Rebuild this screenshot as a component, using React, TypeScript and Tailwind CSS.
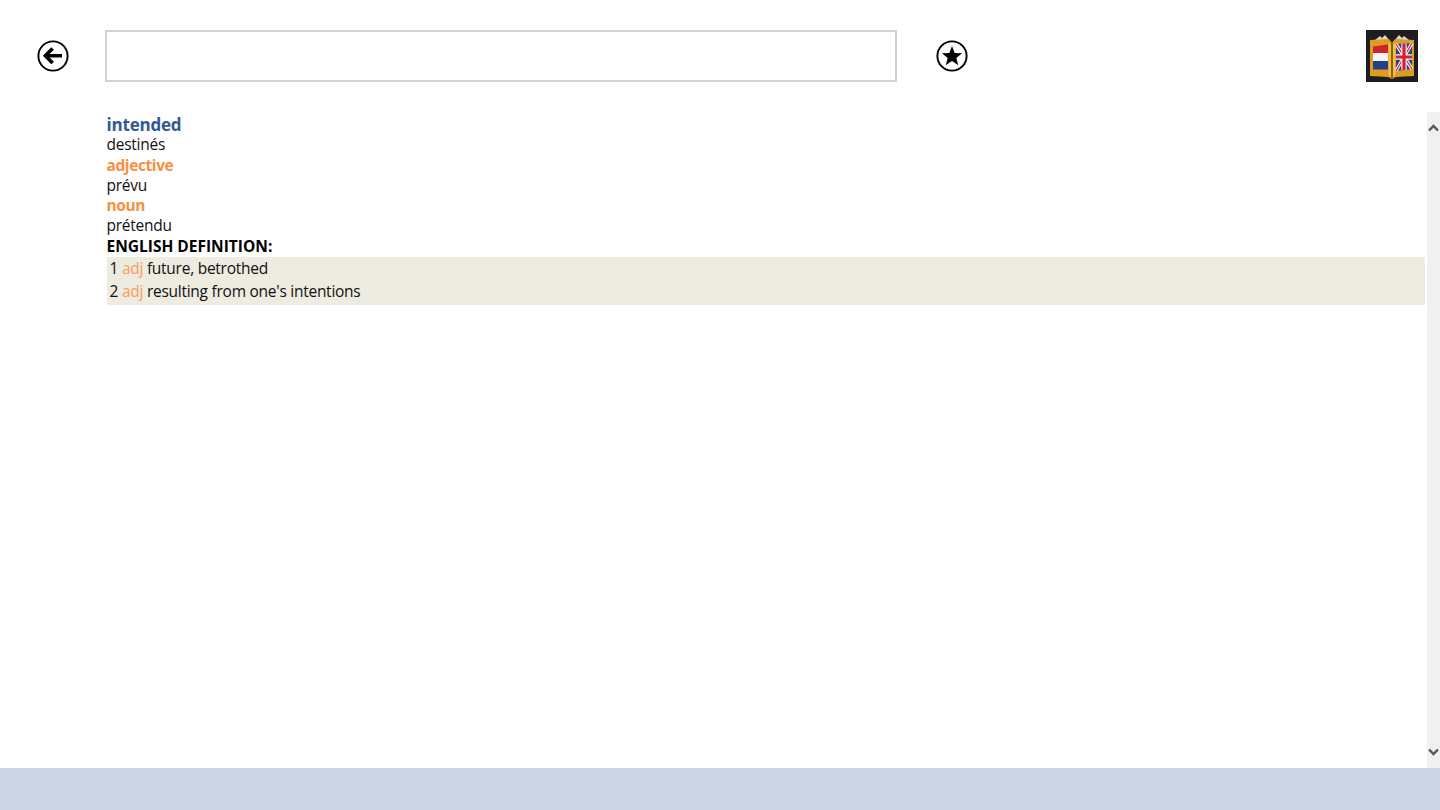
const FONT = "font-['Open_Sans','Noto_Sans',sans-serif]";

const ArrowIcon = () => (
  <svg width="32" height="32" viewBox="0 0 32 32">
    <circle cx="16" cy="16" r="14.6" fill="none" stroke="#000" strokeWidth="1.9" />
    <path d="M15.6 8.6 8.4 15.8l7.2 7.2M9.5 15.8H25" fill="none" stroke="#000" strokeWidth="3.6" />
  </svg>
);

const StarIcon = () => (
  <svg width="32" height="32" viewBox="0 0 32 32">
    <circle cx="16" cy="16" r="14.6" fill="none" stroke="#000" strokeWidth="1.9" />
    <path d="M16 6l2.7 6.9 7.4.3-5.8 4.7 2 7.3L16 21l-6.3 4.2 2-7.3-5.8-4.7 7.4-.3z" fill="#000" />
  </svg>
);

// app logo: open book with the two flags
const BookLogo = () => (
  <svg width="52" height="52" viewBox="0 0 52 52">
    <rect width="52" height="52" fill="#1d1d20" />
    <path d="M9 10l5-4 2 2 3-3 5 6h-15zM28 11l5-6 3 3 2-2 5 4z" fill="#d8d4c8" />
    <path d="M4 10l19-1 3 4 3-4 19 1v36l-18 1-4 2-4-2-18-1z" fill="#dc9c20" />
    <path d="M25 13h2v35h-2z" fill="#8a5d12" />
    <path d="M22.5 12l2.5 2v33l-2.5-1.5zM29.5 12L27 14v33l2.5-1.5z" fill="#f0c040" />
    <path d="M7 16.5l15-2v8.5H7z" fill="#d0222c" />
    <path d="M7 23h15v8H7z" fill="#f5f5f5" />
    <path d="M7 31h15v8.5H7z" fill="#283f8e" />
    <path d="M30 14l16-1v26l-16 2z" fill="#283f8e" />
    <path d="M30 14l16 25M46 13L30 41" stroke="#f5f5f5" strokeWidth="3.4" />
    <path d="M30 14l16 25M46 13L30 41" stroke="#d0222c" strokeWidth="1.2" />
    <path d="M38 13.5V40M30 27h16" stroke="#f5f5f5" strokeWidth="5.4" />
    <path d="M38 13.5V40M30 27h16" stroke="#d0222c" strokeWidth="3.2" />
  </svg>
);

const Row = ({ n, text }: { n: number; text: string }) => (
  <div className="h-[22.5px] leading-[22.5px] pl-[3px]">
    {n} <span className="text-[#f7a05c]">adj</span> {text}
  </div>
);

export default function App() {
  return (
    <div className={`${FONT} flex flex-col h-[810px] w-[1440px] overflow-hidden bg-white text-[15.5px] tracking-[-0.26px] text-[#111]`}>
      <header className="flex h-[112px] shrink-0 items-start pt-[30px]">
        <button className="ml-[37px] mt-[10px] h-8 w-8">
          <ArrowIcon />
        </button>
        <input className="ml-[36px] h-[52px] w-[792px] border-2 border-[#d2d2d2] bg-white" />
        <button className="ml-[38.5px] mt-[10px] h-8 w-8">
          <StarIcon />
        </button>
        <div className="ml-auto mr-[22px]">
          <BookLogo />
        </div>
      </header>

      <main className="flex flex-1 min-h-0">
        <div className="flex-1 pl-[106.5px] pr-[2px] pt-[2.6px]">
          <div className="text-[17px] font-bold leading-[19.4px] tracking-[-0.2px] text-[#2f5a93]">intended</div>
          <div className="leading-[20.4px]">destinés</div>
          <div className="font-bold leading-[22px] tracking-[-0.4px] text-[#f98f3f]">adjective</div>
          <div className="leading-[18.8px]">prévu</div>
          <div className="font-bold leading-[20.4px] tracking-[-0.4px] text-[#f98f3f]">noun</div>
          <div className="leading-[19.4px]">prétendu</div>
          <div className="font-bold leading-[22px] tracking-normal text-black">ENGLISH DEFINITION:</div>
          <div className="bg-[#eeebe0] pb-[3px]">
            <Row n={1} text="future, betrothed" />
            <Row n={2} text="resulting from one's intentions" />
          </div>
        </div>
        <div className="flex w-[13px] shrink-0 flex-col items-center justify-between bg-[#f0f0f0] py-[12px]">
          <svg width="11" height="8" viewBox="0 0 11 8">
            <path d="M1 6.5l4.5-4.5L10 6.5" fill="none" stroke="#555" strokeWidth="2.4" />
          </svg>
          <svg width="11" height="8" viewBox="0 0 11 8">
            <path d="M1 1.5L5.5 6 10 1.5" fill="none" stroke="#555" strokeWidth="2.4" />
          </svg>
        </div>
      </main>

      <footer className="h-[42px] shrink-0 bg-[#cdd6e5]" />
    </div>
  );
}
